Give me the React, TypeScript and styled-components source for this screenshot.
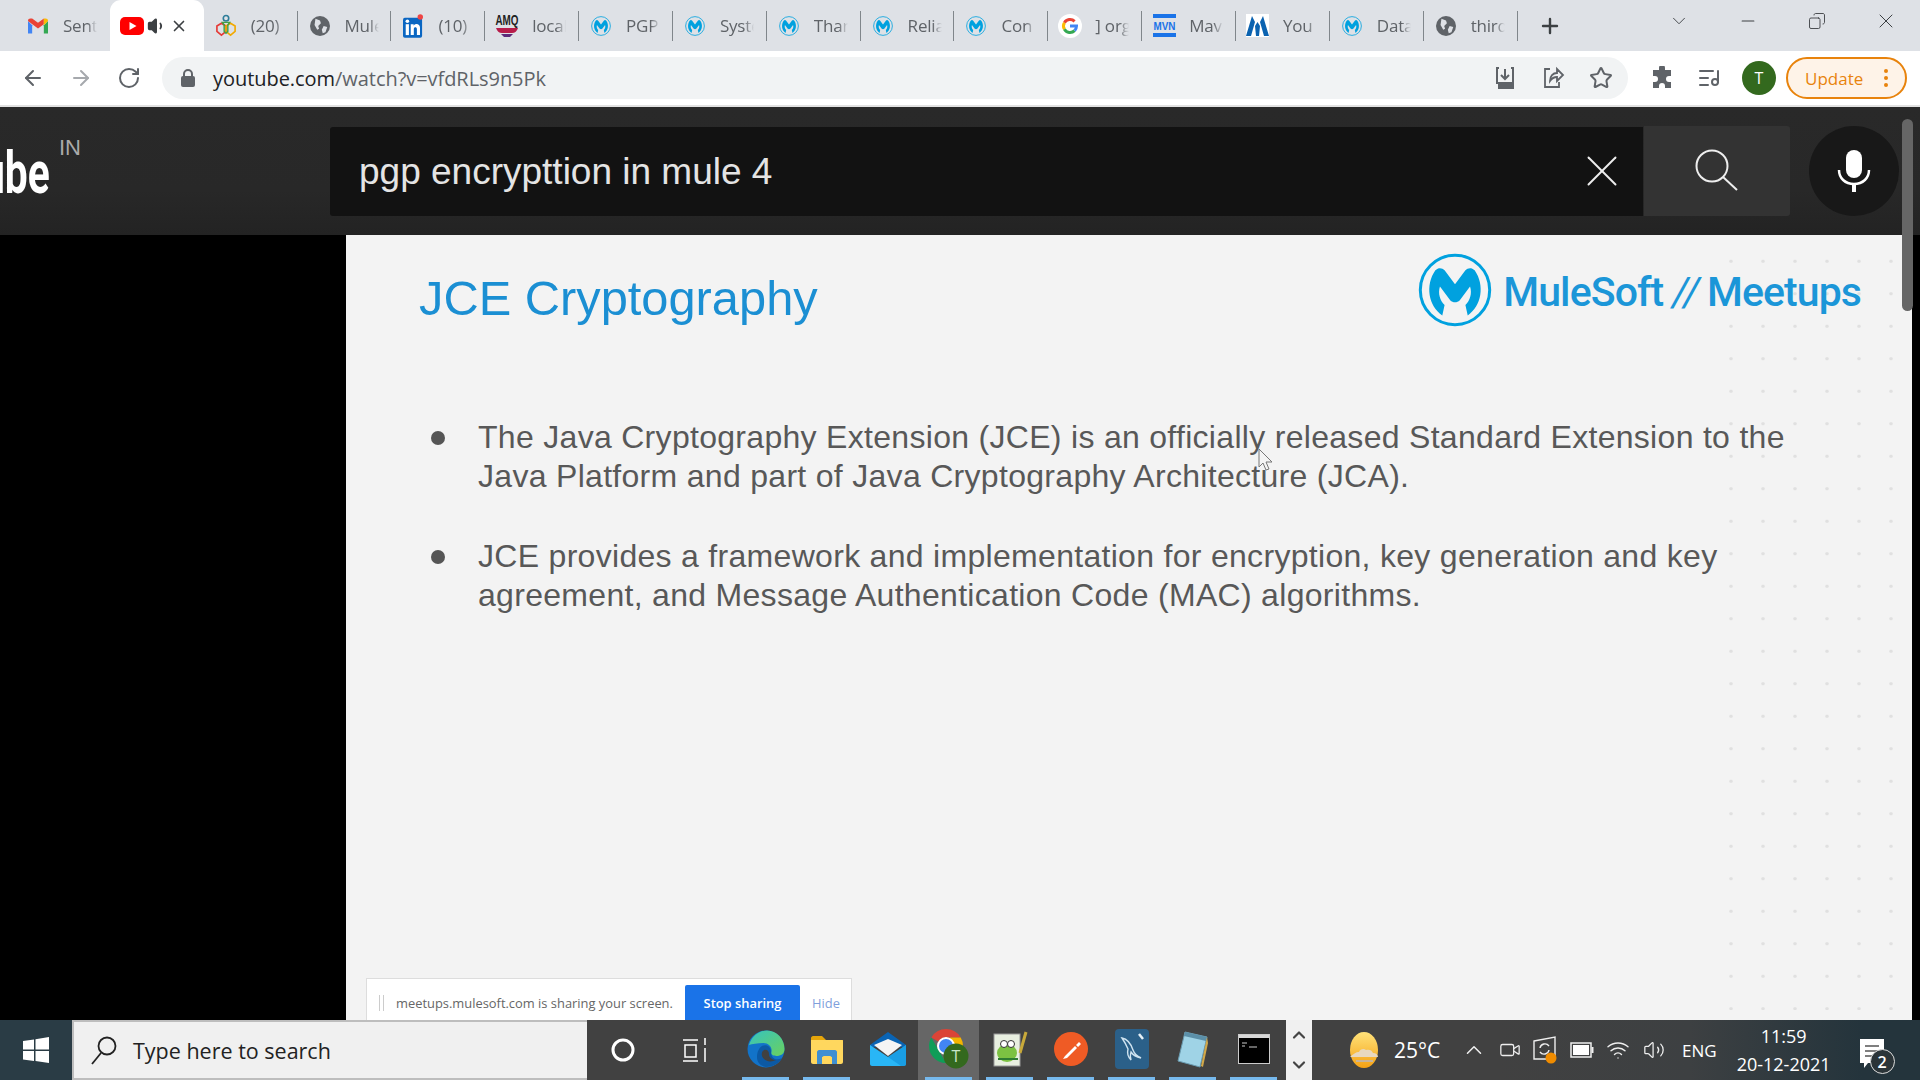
import React from 'react';
import styled, { createGlobalStyle } from 'styled-components';
import { ArrowLeft, ArrowRight, RotateCw, Star, Plus, ChevronDown, ChevronUp, Minus, X, Copy, Volume1, ListMusic, Video, Wifi, Volume2 } from 'lucide-react';

const GlobalStyle = createGlobalStyle`
  html, body { margin: 0; padding: 0; width: 1920px; height: 1080px; overflow: hidden; background: #000; }
  * { box-sizing: border-box; }
  body { font-family: "Open Sans", "Noto Sans", sans-serif; }
`;

const Page = styled.div`
  position: relative;
  width: 1920px;
  height: 1080px;
  display: flex;
  flex-direction: column;
`;

/* tab strip */
const TabStrip = styled.div`
  height: 51px;
  flex: none;
  background: #dee1e6;
  display: flex;
  align-items: stretch;
  padding-left: 16px;
`;

const Tab = styled.div<{ $active?: boolean; $sep?: boolean }>`
  position: relative;
  flex: 0 0 93.85px;
  display: flex;
  align-items: center;
  gap: 15px;
  padding-left: ${p => (p.$active ? '10px' : '12px')};
  background: ${p => (p.$active ? '#fff' : 'transparent')};
  border-radius: ${p => (p.$active ? '11px 11px 0 0' : '0')};
  &::after {
    content: '';
    display: ${p => (p.$sep ? 'block' : 'none')};
    position: absolute;
    right: 0;
    top: 11px;
    height: 30px;
    width: 1px;
    background: #80868b;
  }
`;

const ActiveTabInner = styled.div`
  display: flex;
  align-items: center;
  gap: 3px;
`;

const TabIcon = styled.span`
  flex: none;
  width: 20px;
  height: 24px;
  display: flex;
  align-items: center;
  justify-content: center;
`;

const TabLabel = styled.span`
  width: 34px;
  overflow: hidden;
  white-space: nowrap;
  font-size: 17px;
  letter-spacing: -0.2px;
  color: #5f6368;
  -webkit-mask-image: linear-gradient(90deg, #000 72%, transparent 100%);
  mask-image: linear-gradient(90deg, #000 72%, transparent 100%);
`;

const NewTab = styled.div`
  width: 40px;
  margin-left: 12px;
  display: flex;
  align-items: center;
  justify-content: center;
  color: #3c4043;
`;

const WindowControls = styled.div`
  margin-left: auto;
  display: flex;
`;

const WindowButton = styled.div`
  width: 69px;
  display: flex;
  align-items: center;
  justify-content: center;
  color: #3c4043;
  padding-bottom: 9px;
`;

/* toolbar */
const Toolbar = styled.div`
  height: 54px;
  flex: none;
  background: #fff;
  display: flex;
  align-items: flex-start;
  padding: 6px 13px 0 21px;
`;

const NavGroup = styled.div`
  display: flex;
  gap: 24px;
  height: 42px;
  align-items: center;
  color: #5f6368;
`;

const Omnibox = styled.div`
  margin-left: 21px;
  width: 1466px;
  height: 42px;
  border-radius: 21px;
  background: #f1f3f4;
  display: flex;
  align-items: center;
  padding: 0 15px 0 19px;
`;

const Url = styled.div`
  margin-left: 18px;
  font-size: 20px;
  letter-spacing: -0.05px;
  color: #202124;
  span { color: #5f6368; }
`;

const OmniActions = styled.div`
  margin-left: auto;
  display: flex;
  gap: 24px;
  color: #5f6368;
  align-items: center;
`;

const ExtGroup = styled.div`
  margin-left: 22px;
  display: flex;
  align-items: center;
  height: 42px;
  gap: 23px;
  color: #5f6368;
`;

const Avatar = styled.div`
  width: 34px;
  height: 34px;
  margin-left: -2px;
  border-radius: 50%;
  background: #33691e;
  color: #fff;
  font-size: 16px;
  display: flex;
  align-items: center;
  justify-content: center;
`;

const UpdatePill = styled.div`
  margin-left: 10px;
  width: 121px;
  height: 42px;
  border: 2px solid #e8830c;
  border-radius: 21px;
  background: #fef3e8;
  color: #e8830c;
  font-size: 17px;
  display: flex;
  align-items: center;
  padding-left: 17px;
  gap: 21px;
`;

const Dots = styled.div`
  display: flex;
  flex-direction: column;
  gap: 3px;
  i { width: 4px; height: 4px; border-radius: 50%; background: #e8830c; display: block; }
`;

/* youtube header */
const YtHeader = styled.div`
  height: 130px;
  flex: none;
  border-top: 2px solid #e2e2e2;
  background: linear-gradient(180deg, #292929 0%, #282828 65%, #232323 100%);
  display: flex;
  align-items: center;
`;

const LogoArea = styled.div`
  width: 330px;
  height: 100%;
  display: flex;
  align-items: flex-start;
  flex: none;
`;

const LogoClip = styled.div`
  width: 50px;
  height: 100%;
  overflow: hidden;
  display: flex;
  justify-content: flex-end;
  align-items: flex-start;
`;

const LogoText = styled.span`
  font-family: "Roboto", sans-serif;
  font-weight: 700;
  font-size: 60px;
  line-height: 60px;
  margin-top: 36px;
  color: #fff;
  transform: scaleX(0.68);
  transform-origin: right center;
  white-space: nowrap;
`;

const Country = styled.span`
  margin: 28px 0 0 9px;
  font-family: "Liberation Sans", sans-serif;
  font-size: 22px;
  color: #aaa;
`;

const SearchBox = styled.div`
  width: 1313px;
  height: 89px;
  background: #121212;
  border-radius: 3px 0 0 3px;
  display: flex;
  align-items: center;
  padding: 0 14px 0 29px;
  flex: none;
`;

const SearchText = styled.div`
  font-family: "Liberation Sans", sans-serif;
  font-size: 37px;
  padding-top: 2px;
  color: #e4e4e4;
  flex: 1;
`;

const SearchButton = styled.div`
  margin-left: 1px;
  width: 146px;
  height: 90px;
  background: #333;
  border-radius: 0 3px 3px 0;
  display: flex;
  align-items: center;
  justify-content: center;
  flex: none;
`;

const MicButton = styled.div`
  margin-left: 19px;
  width: 90px;
  height: 90px;
  border-radius: 50%;
  background: #181818;
  display: flex;
  align-items: center;
  justify-content: center;
  flex: none;
`;

const ScrollThumb = styled.div`
  position: absolute;
  z-index: 2;
  left: 1902px;
  top: 119px;
  width: 11px;
  height: 192px;
  border-radius: 6px;
  background: #666;
`;

/* video */
const VideoRow = styled.div`
  flex: 1;
  display: flex;
  background: #000;
  min-height: 0;
`;

const BlackBar = styled.div<{ $w: number }>`
  flex: 0 0 ${p => p.$w}px;
  background: #000;
`;

const Slide = styled.div`
  position: relative;
  flex: 1;
  overflow: hidden;
  background: #f3f3f3;
  font-family: "Liberation Sans", Arial, sans-serif;
`;

const DotField = styled.div`
  position: absolute;
  right: 14px;
  top: 10px;
  bottom: 10px;
  width: 190px;
  background-image: radial-gradient(circle, rgba(0, 0, 0, 0.08) 1.4px, transparent 2px);
  background-size: 32px 32.5px;
  background-position: 7px 0;
`;

const SlideHead = styled.div`
  position: relative;
  display: flex;
  justify-content: space-between;
  align-items: flex-start;
  padding: 18px 51px 0 73px;
  height: 171px;
`;

const SlideTitle = styled.h1`
  margin: 0;
  padding-top: 14px;
  font-weight: 400;
  font-size: 48.8px;
  line-height: 62px;
  color: #1b8fd3;
`;

const MuleLockup = styled.div`
  display: flex;
  align-items: center;
  gap: 11px;
  color: #1b96d8;
  font-family: "Roboto", sans-serif;
  font-weight: 500;
  font-size: 41px;
  letter-spacing: -0.9px;
  span { margin-top: 3px; }
`;

const Slash = styled.span`
  margin: 0 8px 0 9px;
  font-weight: 400;
  font-style: italic;
`;

const BulletList = styled.ul`
  position: relative;
  list-style: none;
  margin: 0;
  padding: 12px 0 0 78px;
  display: flex;
  flex-direction: column;
  gap: 41px;
`;

const Bullet = styled.li`
  display: flex;
  gap: 33px;
  font-size: 32px;
  letter-spacing: 0.3px;
  line-height: 39px;
  color: #585858;
  white-space: nowrap;
  &::before {
    content: '';
    flex: none;
    width: 14px;
    height: 14px;
    margin: 13px 0 0 7px;
    border-radius: 50%;
    background: #555;
  }
`;

const Cursor = styled.svg`
  position: absolute;
  left: 912px;
  top: 213px;
`;

const ShareBar = styled.div`
  position: absolute;
  left: 20px;
  bottom: 0;
  width: 486px;
  height: 42px;
  background: #fff;
  border: 1px solid #ddd;
  border-bottom: 0;
  display: flex;
  align-items: flex-end;
  padding-left: 12px;
  font-family: "Open Sans", sans-serif;
  font-size: 12.9px;
  color: #666;
`;

const GripLines = styled.span`
  width: 5px;
  height: 16px;
  margin: 0 12px 9px 0;
  border-left: 1px solid #ccc;
  border-right: 1px solid #ccc;
`;

const ShareText = styled.span`
  margin-bottom: 8px;
  width: 289px;
  white-space: nowrap;
`;

const StopButton = styled.div`
  width: 115px;
  height: 35px;
  background: #1a73e8;
  color: #fff;
  font-weight: 600;
  display: flex;
  align-items: center;
  justify-content: center;
  border-radius: 2px 2px 0 0;
`;

const HideLink = styled.span`
  margin: 0 0 8px 12px;
  color: #7f9fdc;
`;

/* taskbar */
const Taskbar = styled.div`
  height: 60px;
  flex: none;
  display: flex;
  background: linear-gradient(90deg, #414141 0%, #414141 78%, #3d4042 88%, #24343c 97%);
  color: #fff;
`;

const StartButton = styled.div`
  width: 72px;
  flex: none;
  background: #2a3c45;
  display: flex;
  align-items: center;
  justify-content: center;
`;

const SearchField = styled.div`
  width: 515px;
  flex: none;
  background: #f0f0f0;
  border: 2px solid #bdbdbd;
  border-right: 0;
  display: flex;
  align-items: center;
  padding-left: 15px;
  gap: 14px;
  color: #222;
  font-size: 21.5px;
`;

const SystemCell = styled.div<{ $w: number }>`
  flex: 0 0 ${p => p.$w}px;
  display: flex;
  align-items: center;
  justify-content: center;
`;

const AppCell = styled.div<{ $on?: boolean; $active?: boolean }>`
  position: relative;
  flex: 0 0 61px;
  display: flex;
  align-items: center;
  justify-content: center;
  padding-bottom: 3px;
  background: ${p => (p.$active ? '#666' : 'transparent')};
  &::after {
    content: '';
    display: ${p => (p.$on ? 'block' : 'none')};
    position: absolute;
    left: 7px;
    right: 7px;
    bottom: 0;
    height: 3px;
    background: #76b9ed;
  }
`;

const TrayScroller = styled.div`
  flex: 0 0 26px;
  margin-left: 2px;
  background: #f0f0f0;
  color: #444;
  display: flex;
  flex-direction: column;
  align-items: center;
  justify-content: space-around;
`;

const Tray = styled.div`
  flex: 1;
  display: flex;
  align-items: center;
  padding-left: 36px;
`;

const Temp = styled.span`
  margin-left: 14px;
  font-size: 21px;
  width: 62px;
`;

const TrayIcons = styled.div`
  display: flex;
  align-items: center;
  color: #eee;
`;

const TrayCell = styled.div`
  width: 36px;
  display: flex;
  align-items: center;
  justify-content: center;
`;

const Lang = styled.span`
  margin-left: 10px;
  font-size: 17px;
`;

const Clock = styled.div`
  margin-left: 2px;
  width: 130px;
  text-align: center;
  font-size: 18px;
  line-height: 28px;
`;

const Notify = styled.div`
  position: relative;
  margin-left: 10px;
  width: 40px;
  height: 48px;
  padding-top: 12px;
`;

const NotifyCount = styled.span`
  position: absolute;
  right: 4px;
  bottom: 0;
  width: 25px;
  height: 25px;
  border-radius: 50%;
  border: 1.5px solid #ddd;
  background: #2b3438;
  font-size: 16px;
  font-weight: 600;
  display: flex;
  align-items: center;
  justify-content: center;
`;

/* drawn icons */
const MuleIcon = ({ size = 24 }: { size?: number }) => (
  <svg width={size} height={size} viewBox="0 0 64 64">
    <circle cx="32" cy="32" r="30" fill="none" stroke="#00a1df" strokeWidth="2.6" />
    <path
      d="M21 54C9 46 6 28 15 15c3-3 6-2 8 0L32 27l9-12c2-2 5-3 8 0C58 28 55 46 43 54l-2-9C45 41 47 35 45 29L36 41c-2 2-6 2-8 0L19 29C17 35 19 41 23 45Z"
      fill="#00a1df"
    />
  </svg>
);

const GlobeIcon = () => (
  <svg width="22" height="22" viewBox="0 0 22 22">
    <circle cx="11" cy="11" r="11" fill="#5f6368" />
    <path d="M6 3l5 2 1 3-3 3 1 3-2 1-3-5zM15 11l4 1-2 6-3 1-1-4z" fill="#dee1e6" />
  </svg>
);

const GmailIcon = () => (
  <svg width="23" height="18" viewBox="0 0 24 18">
    <path d="M0 3v15h5V8z" fill="#4285f4" />
    <path d="M24 3v15h-5V8z" fill="#34a853" />
    <path d="M0 3l12 9 7-5V0l-7 5-7-5H3C1 0 0 1 0 3z" fill="#ea4335" />
    <path d="M19 0v8l5-5c0-2-1-3-3-3z" fill="#fbbc04" />
  </svg>
);

const YtIcon = () => (
  <svg width="24" height="24" viewBox="0 0 24 24">
    <rect x="0" y="3" width="24" height="18" rx="5" fill="#f00" />
    <path d="M9.500 8l7 4-7 4z" fill="#fff" />
  </svg>
);

const PeopleIcon = () => (
  <svg width="22" height="26" viewBox="0 0 22 26">
    <path d="M1 13l5-3 5 3v6l-5 4-5-4z" fill="none" stroke="#e53935" strokeWidth="1.800" />
    <path d="M11 13l5-3 5 3v6l-5 4-5-4z" fill="none" stroke="#f2a900" strokeWidth="1.800" />
    <circle cx="11" cy="4.500" r="3" fill="none" stroke="#2e7d9a" strokeWidth="1.800" />
    <path d="M7 9h8l-2 3v7l-2 2-2-2v-7z" fill="none" stroke="#43a047" strokeWidth="1.600" />
  </svg>
);

const LinkedInIcon = () => (
  <svg width="22" height="26" viewBox="0 0 22 26">
    <rect x="0" y="4" width="21" height="22" rx="2" fill="#0a66c2" />
    <rect x="3" y="11" width="3.500" height="12" fill="#fff" />
    <circle cx="4.800" cy="7.800" r="2" fill="#fff" />
    <path d="M8.500 11h3.200v1.600c2-2.800 7-2.200 7 2.400v8h-3.400v-6.500c0-2.800-3.400-2.800-3.400 0V23H8.500z" fill="#fff" />
    <circle cx="19" cy="3" r="3" fill="#ef4444" />
  </svg>
);

const AmqIcon = () => (
  <svg width="24" height="26" viewBox="0 0 24 26" style={{ flex: 'none' }}>
    <text x="12" y="12" textAnchor="middle" fontFamily="Liberation Sans" fontWeight="700" fontSize="14" textLength="23" lengthAdjust="spacingAndGlyphs" fill="#222">AMQ</text>
    <path d="M1 15h22c-1 3-3 5-6 5H7c-3 0-5-2-6-5z" fill="#b71c4a" />
    <path d="M6 21h12l-3 3H9z" fill="#5d2a7a" />
  </svg>
);

const GoogleIcon = () => (
  <svg width="24" height="24" viewBox="0 0 24 24" style={{ flex: 'none' }}>
    <circle cx="12" cy="12" r="12" fill="#fff" />
    <g fill="none" strokeWidth="3">
      <path d="M6.400 8.700A6.500 6.500 0 0 1 16.600 7.400" stroke="#ea4335" />
      <path d="M6.400 8.700A6.500 6.500 0 0 0 6.400 15.300" stroke="#fbbc05" />
      <path d="M6.400 15.300A6.500 6.500 0 0 0 16.600 16.600" stroke="#34a853" />
      <path d="M16.600 16.600A6.500 6.500 0 0 0 18.500 12H12" stroke="#4285f4" />
    </g>
  </svg>
);

const MvnIcon = () => (
  <svg width="23" height="23" viewBox="0 0 23 23" style={{ flex: 'none' }}>
    <rect x="0" y="0" width="23" height="4" fill="#1a73e8" />
    <rect x="0" y="19" width="23" height="4" fill="#1a73e8" />
    <text x="11.500" y="15.500" textAnchor="middle" fontFamily="Liberation Sans" fontWeight="700" fontSize="10" textLength="22" lengthAdjust="spacingAndGlyphs" fill="#1a73e8">MVN</text>
  </svg>
);

const PeaksIcon = () => (
  <svg width="23" height="23" viewBox="0 0 23 23" style={{ flex: 'none' }}>
    <rect width="23" height="23" fill="#fff" />
    <path d="M0 22L6 2l3 6-4 14zM9 12l2.500-4 2.500 4-1 10h-3zM23 22L17 2l-3 6 4 14z" fill="#0a62b0" />
  </svg>
);

const WindowsLogo = () => (
  <svg width="26" height="26" viewBox="0 0 26 26">
    <path d="M0 4l11-1.500v10H0zM12.500 2.300L26 0v12.500H12.500zM0 14h11v10L0 22.500zM12.500 14H26v12l-13.500-2z" fill="#fff" />
  </svg>
);

const EdgeIcon = () => (
  <svg width="38" height="38" viewBox="0 0 38 38">
    <defs>
      <linearGradient id="edgeA" x1="0" y1="0" x2="1" y2="1">
        <stop offset="0" stopColor="#36c3c0" />
        <stop offset="1" stopColor="#6ad15e" />
      </linearGradient>
    </defs>
    <circle cx="19" cy="19" r="18.500" fill="#1273c9" />
    <path d="M2 15C5 5 13 .5 20 .5 30 .5 37.500 9 37.500 19c0 5-4 7-8 7-3 0-6-1-5-4 1-5-3-9-8-9C10 13 5 14 2 15z" fill="url(#edgeA)" />
    <path d="M15 16c4-2 9 0 9 6 0 7 6 9 11 6-3 6-10 9-16 9-6-1-9-5-9-10 0-5 2-9 5-11z" fill="#0c59a4" />
    <path d="M17 20c3-1 5 1 5 4 0 4 4 6 7 6-4 2-9 2-12-1-3-3-3-7 0-9z" fill="#414141" />
  </svg>
);

const FolderIcon = () => (
  <svg width="32" height="30" viewBox="0 0 32 30">
    <path d="M0 4c0-1 1-2 2-2h9l4 4h17v2H0z" fill="#e5a50a" />
    <path d="M0 6h31c.5 0 1 .5 1 1v21c0 1-1 2-2 2H2c-1 0-2-1-2-2z" fill="#ffd75e" />
    <path d="M6 30V18c0-1 1-2 2-2h16c1 0 2 1 2 2v12h-5v-6c0-1-1-2-2-2h-6c-1 0-2 1-2 2v6z" fill="#3f8fd2" />
    <rect x="11" y="23" width="10" height="7" fill="#ffd75e" />
  </svg>
);

const MailIcon = () => (
  <svg width="36" height="34" viewBox="0 0 36 34">
    <path d="M0 13L18 0l18 13v2H0z" fill="#0a64b4" />
    <path d="M4 13L18 7l14 6-14 11z" fill="#f4f4f4" />
    <path d="M0 13l18 12 18-12v19c0 1-1 2-2 2H2c-1 0-2-1-2-2z" fill="#29b6f6" />
    <path d="M18 25l18-12v19c0 1-1 2-2 2h-3z" fill="#0d8ad6" opacity=".55" />
  </svg>
);

const ChromeBadgeIcon = () => (
  <svg width="40" height="40" viewBox="0 0 40 40">
    <path d="M17 0a17 17 0 0 1 14.700 8.500H17a8.500 8.500 0 0 0-7.400 4.300L2.300 8.500A17 17 0 0 1 17 0z" fill="#db4437" />
    <path d="M31.700 8.500A17 17 0 0 1 34 17H22l-1-8.500z" fill="#f4b400" />
    <path d="M2.300 8.500l7.300 12.700L17 34A17 17 0 0 1 2.300 8.500z" fill="#0f9d58" />
    <circle cx="17" cy="17" r="8" fill="#4285f4" stroke="#fff" strokeWidth="2" />
    <circle cx="27" cy="27" r="12.500" fill="#33691e" />
    <text x="27" y="33" textAnchor="middle" fontFamily="Open Sans" fontSize="16" fill="#c8e6c9">T</text>
  </svg>
);

const NotepadPPIcon = () => (
  <svg width="36" height="36" viewBox="0 0 36 36">
    <rect x="2" y="3" width="26" height="32" fill="#e8efe0" stroke="#999" />
    <ellipse cx="15" cy="22" rx="10" ry="9" fill="#7cc242" />
    <circle cx="12" cy="13" r="3.500" fill="#fff" stroke="#333" />
    <circle cx="19" cy="13" r="3.500" fill="#fff" stroke="#333" />
    <path d="M6 28h20" stroke="#2e7d32" strokeWidth="2" />
    <path d="M34 1L28 22" stroke="#c8a93a" strokeWidth="3" />
  </svg>
);

const PostmanIcon = () => (
  <svg width="34" height="34" viewBox="0 0 34 34">
    <circle cx="17" cy="17" r="17" fill="#ef5b25" />
    <path d="M11 24l10-10 2 2-10 10-4 1zM22 13l3-3 2 2-3 3z" fill="#fff" />
  </svg>
);

const MysqlIcon = () => (
  <svg width="34" height="40" viewBox="0 0 34 40">
    <rect width="34" height="40" rx="4" fill="#2b6089" />
    <path d="M7 9c5 1 9 6 11 12 1 3 4 6 8 8-5-1-8-3-10-6-1 3-1 5 0 8-3-3-4-7-3-11C11 15 9 12 7 9z" fill="none" stroke="#cfe3f0" strokeWidth="1.400" />
    <path d="M24 5l4 5" stroke="#e6f0f6" strokeWidth="2.500" />
  </svg>
);

const NotepadIcon = () => (
  <svg width="32" height="38" viewBox="0 0 32 38">
    <path d="M8 2l22 5-7 30L1 31z" fill="#9fd3e6" stroke="#6a9bb0" />
    <path d="M8 2l22 5-1 4L7 6z" fill="#5b8fa8" />
    <path d="M24 36l6-29 1 6-5 24z" fill="#d2a94a" />
  </svg>
);

const CmdIcon = () => (
  <svg width="32" height="30" viewBox="0 0 32 30">
    <rect x="0.500" y="0.500" width="31" height="29" fill="#000" stroke="#ccc" />
    <rect x="1" y="1" width="30" height="3" fill="#d8d8d8" />
    <path d="M4 9h5M4 12h3M11 13h8" stroke="#ccc" strokeWidth="1.200" />
  </svg>
);

const SearchGlass = () => (
  <svg width="30" height="34" viewBox="0 0 30 34" fill="none" stroke="#222" strokeWidth="1.800">
    <circle cx="18" cy="13" r="8.500" />
    <path d="M12 20L3 31" />
  </svg>
);

const SearchLens = () => (
  <svg width="44" height="44" viewBox="0 0 44 44" fill="none" stroke="#eee" strokeWidth="2">
    <circle cx="17" cy="17" r="15.500" />
    <path d="M28 28l14 13" />
  </svg>
);

const MicIcon = () => (
  <svg width="34" height="42" viewBox="0 0 34 42">
    <rect x="9" y="0" width="16" height="28" rx="8" fill="#fff" />
    <path d="M2 20c0 8 6 14 15 14s15-6 15-14" fill="none" stroke="#fff" strokeWidth="2.500" />
    <rect x="15" y="34" width="4" height="8" fill="#fff" />
  </svg>
);

const LockIcon = () => (
  <svg width="14" height="18" viewBox="0 0 14 18" fill="#5f6368">
    <rect x="0" y="7" width="14" height="11" rx="2" />
    <path d="M3 8V5a4 4 0 0 1 8 0v3" fill="none" stroke="#5f6368" strokeWidth="2" />
  </svg>
);

const InstallIcon = () => (
  <svg width="24" height="24" viewBox="0 0 24 24" fill="none" stroke="#5f6368" strokeWidth="2">
    <path d="M6 2h-2v15h16V2h-2" />
    <path d="M12 3v10M8 9l4 4 4-4" />
    <rect x="6" y="19" width="14" height="3" fill="#5f6368" />
  </svg>
);

const ShareIcon = () => (
  <svg width="24" height="24" viewBox="0 0 24 24" fill="none" stroke="#5f6368" strokeWidth="1.800">
    <path d="M9 3H4v18h14v-5" />
    <path d="M9 15c0-5 3-8 7-8V3l6 6-6 6v-4c-3 0-5 1-7 4z" />
  </svg>
);

const PuzzleIcon = () => (
  <svg width="24" height="24" viewBox="0 0 24 24" fill="#5f6368">
    <path d="M9 2a3 3 0 0 1 6 0v2h6v6h-2a3 3 0 0 0 0 6h2v6h-6v-2a3 3 0 0 0-6 0v2H3v-6h2a3 3 0 0 0 0-6H3V4h6z" />
  </svg>
);

const WeatherIcon = () => (
  <svg width="32" height="36" viewBox="0 0 32 36">
    <defs>
      <linearGradient id="sun" x1="0" y1="0" x2="0" y2="1">
        <stop offset="0" stopColor="#ffe27a" />
        <stop offset="1" stopColor="#f5a214" />
      </linearGradient>
    </defs>
    <ellipse cx="16" cy="18" rx="14" ry="18" fill="url(#sun)" />
    <path d="M2 25h28c0-2-2-4-5-4-1-3-4-4-7-3-2-2-6-1-7 2-3 0-6 2-9 5z" fill="#e8d8c0" />
    <path d="M8 29h17" stroke="#c8b49a" strokeWidth="2" />
  </svg>
);

const SyncBoxIcon = () => (
  <svg width="26" height="30" viewBox="0 0 26 30">
    <path d="M1 6l21-4v22L1 24z" fill="none" stroke="#eee" strokeWidth="1.400" />
    <path d="M7 13a5 5 0 0 1 9-2M16 15a5 5 0 0 1-9 2" fill="none" stroke="#eee" strokeWidth="1.400" />
    <circle cx="18" cy="23" r="5.500" fill="#f08c00" />
  </svg>
);

const BatteryIcon = () => (
  <svg width="24" height="16" viewBox="0 0 24 16">
    <rect x="1" y="1" width="20" height="14" fill="none" stroke="#eee" strokeWidth="1.500" />
    <rect x="3" y="3" width="16" height="10" fill="#fff" />
    <rect x="21.500" y="5" width="2" height="6" fill="#eee" />
  </svg>
);

const NotifyIcon = () => (
  <svg width="26" height="32" viewBox="0 0 26 32">
    <path d="M1 1h24v24H9l-4 5v-5H1z" fill="#fff" />
    <path d="M6 8h14M6 13h14M6 18h8" stroke="#555" strokeWidth="1.500" />
  </svg>
);

const tabs: { icon: React.ReactNode; label: string }[] = [
  { icon: <PeopleIcon />, label: '(20)' },
  { icon: <GlobeIcon />, label: 'Mule' },
  { icon: <LinkedInIcon />, label: '(10)' },
  { icon: <AmqIcon />, label: 'local' },
  { icon: <MuleIcon />, label: 'PGP' },
  { icon: <MuleIcon />, label: 'Syste' },
  { icon: <MuleIcon />, label: 'Than' },
  { icon: <MuleIcon />, label: 'Relia' },
  { icon: <MuleIcon />, label: 'Con' },
  { icon: <GoogleIcon />, label: '] org' },
  { icon: <MvnIcon />, label: 'Mav' },
  { icon: <PeaksIcon />, label: 'You' },
  { icon: <MuleIcon />, label: 'Data' },
  { icon: <GlobeIcon />, label: 'third' },
];

const apps: { icon: React.ReactNode; on?: boolean; active?: boolean }[] = [
  { icon: <EdgeIcon />, on: true },
  { icon: <FolderIcon />, on: true },
  { icon: <MailIcon /> },
  { icon: <ChromeBadgeIcon />, on: true, active: true },
  { icon: <NotepadPPIcon />, on: true },
  { icon: <PostmanIcon />, on: true },
  { icon: <MysqlIcon />, on: true },
  { icon: <NotepadIcon />, on: true },
  { icon: <CmdIcon />, on: true },
];

export default function App() {
  return (
    <Page>
      <GlobalStyle />
      <TabStrip>
        <Tab>
          <TabIcon><GmailIcon /></TabIcon>
          <TabLabel>Sent</TabLabel>
        </Tab>
        <Tab $active>
          <ActiveTabInner>
            <YtIcon />
            <Volume1 size={20} color="#3c4043" fill="#3c4043" />
            <X size={18} color="#3c4043" strokeWidth={2.2} />
          </ActiveTabInner>
        </Tab>
        {tabs.map((tab, i) => (
          <Tab key={i} $sep>
            <TabIcon>{tab.icon}</TabIcon>
            <TabLabel>{tab.label}</TabLabel>
          </Tab>
        ))}
        <NewTab><Plus size={24} strokeWidth={2.4} /></NewTab>
        <WindowControls>
          <WindowButton><ChevronDown size={22} strokeWidth={1} /></WindowButton>
          <WindowButton><Minus size={20} strokeWidth={1.4} /></WindowButton>
          <WindowButton><Copy size={18} strokeWidth={1.2} style={{ transform: 'scaleX(-1)' }} /></WindowButton>
          <WindowButton><X size={24} strokeWidth={1} /></WindowButton>
        </WindowControls>
      </TabStrip>

      <Toolbar>
        <NavGroup>
          <ArrowLeft size={24} />
          <ArrowRight size={24} color="#a6a9ad" />
          <RotateCw size={24} />
        </NavGroup>
        <Omnibox>
          <LockIcon />
          <Url>youtube.com<span>/watch?v=vfdRLs9n5Pk</span></Url>
          <OmniActions>
            <InstallIcon />
            <ShareIcon />
            <Star size={24} strokeWidth={2} />
          </OmniActions>
        </Omnibox>
        <ExtGroup>
          <PuzzleIcon />
          <ListMusic size={24} />
          <Avatar>T</Avatar>
        </ExtGroup>
        <UpdatePill>
          Update
          <Dots><i /><i /><i /></Dots>
        </UpdatePill>
      </Toolbar>

      <YtHeader>
        <LogoArea>
          <LogoClip><LogoText>ube</LogoText></LogoClip>
          <Country>IN</Country>
        </LogoArea>
        <SearchBox>
          <SearchText>pgp encrypttion in mule 4</SearchText>
          <X size={54} color="#eee" strokeWidth={0.85} />
        </SearchBox>
        <SearchButton><SearchLens /></SearchButton>
        <MicButton><MicIcon /></MicButton>
      </YtHeader>
      <ScrollThumb />

      <VideoRow>
        <BlackBar $w={346} />
        <Slide>
          <DotField />
          <SlideHead>
            <SlideTitle>JCE Cryptography</SlideTitle>
            <MuleLockup>
              <MuleIcon size={74} />
              <span>MuleSoft<Slash>//</Slash>Meetups</span>
            </MuleLockup>
          </SlideHead>
          <BulletList>
            <Bullet>
              <span>
                The Java Cryptography Extension (JCE) is an officially released Standard Extension to the
                <br />
                Java Platform and part of Java Cryptography Architecture (JCA).
              </span>
            </Bullet>
            <Bullet>
              <span>
                JCE provides a framework and implementation for encryption, key generation and key
                <br />
                agreement, and Message Authentication Code (MAC) algorithms.
              </span>
            </Bullet>
          </BulletList>
          <Cursor width="18" height="24" viewBox="0 0 18 24">
            <path d="M1 1v18l4-4 3 7 3-1-3-7h6z" fill="#f4f4f4" stroke="#777" />
          </Cursor>
          <ShareBar>
            <GripLines />
            <ShareText>meetups.mulesoft.com is sharing your screen.</ShareText>
            <StopButton>Stop sharing</StopButton>
            <HideLink>Hide</HideLink>
          </ShareBar>
        </Slide>
        <BlackBar $w={8} />
      </VideoRow>

      <Taskbar>
        <StartButton><WindowsLogo /></StartButton>
        <SearchField>
          <SearchGlass />
          Type here to search
        </SearchField>
        <SystemCell $w={72}>
          <svg width="24" height="24" viewBox="0 0 24 24"><circle cx="12" cy="12" r="10" fill="none" stroke="#fff" strokeWidth="3" /></svg>
        </SystemCell>
        <SystemCell $w={72}>
          <svg width="26" height="26" viewBox="0 0 26 26" fill="none" stroke="#fff" strokeWidth="1.500">
            <path d="M1 3h15M1 24h15M3 8h11v12H3zM23 1v7M23 11v14" />
          </svg>
        </SystemCell>
        <SystemCell $w={4} />
        {apps.map((app, i) => (
          <AppCell key={i} $on={app.on} $active={app.active}>{app.icon}</AppCell>
        ))}
        <TrayScroller>
          <ChevronUp size={20} strokeWidth={2.6} />
          <ChevronDown size={20} strokeWidth={2.6} />
        </TrayScroller>
        <Tray>
          <WeatherIcon />
          <Temp>25°C</Temp>
          <TrayIcons>
            <TrayCell><ChevronUp size={26} strokeWidth={1.4} /></TrayCell>
            <TrayCell><Video size={22} strokeWidth={1.4} /></TrayCell>
            <TrayCell><SyncBoxIcon /></TrayCell>
            <TrayCell><BatteryIcon /></TrayCell>
            <TrayCell><Wifi size={24} strokeWidth={1.4} /></TrayCell>
            <TrayCell><Volume2 size={22} strokeWidth={1.4} /></TrayCell>
          </TrayIcons>
          <Lang>ENG</Lang>
          <Clock>11:59<br />20-12-2021</Clock>
          <Notify>
            <NotifyIcon />
            <NotifyCount>2</NotifyCount>
          </Notify>
        </Tray>
      </Taskbar>
    </Page>
  );
}
